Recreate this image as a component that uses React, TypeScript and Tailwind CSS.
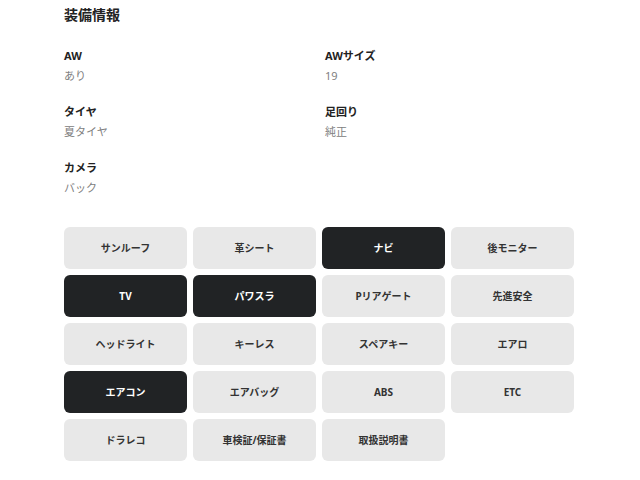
/**
 * Equipment info section
 * Spec list followed by a grid of equipment tags; owned items are dark
 */

const specs = [
  { label: "AW", value: "あり" },
  { label: "AWサイズ", value: "19" },
  { label: "タイヤ", value: "夏タイヤ" },
  { label: "足回り", value: "純正" },
  { label: "カメラ", value: "バック" },
];

const equipment: { name: string; active?: boolean }[] = [
  { name: "サンルーフ" },
  { name: "革シート" },
  { name: "ナビ", active: true },
  { name: "後モニター" },
  { name: "TV", active: true },
  { name: "パワスラ", active: true },
  { name: "Pリアゲート" },
  { name: "先進安全" },
  { name: "ヘッドライト" },
  { name: "キーレス" },
  { name: "スペアキー" },
  { name: "エアロ" },
  { name: "エアコン", active: true },
  { name: "エアバッグ" },
  { name: "ABS" },
  { name: "ETC" },
  { name: "ドラレコ" },
  { name: "車検証/保証書" },
  { name: "取扱説明書" },
];

export default function App() {
  return (
    <div className="min-h-screen bg-white font-['Noto_Sans','Noto_Sans_CJK_JP',sans-serif] text-[#222]">
      <div className="w-[510px] ml-[64px] pt-[5px]">
        <h2 className="text-[14px] leading-[20px] font-bold">装備情報</h2>

        <dl className="mt-[22px] grid grid-cols-2 gap-x-3 gap-y-[18px]">
          {specs.map((s) => (
            <div key={s.label} className="flex flex-col">
              <dt className="text-[11px] leading-[18px] font-bold">{s.label}</dt>
              <dd className="mt-[2px] text-[11px] leading-[18px] text-[#808080]">{s.value}</dd>
            </div>
          ))}
        </dl>

        <div className="mt-[30px] grid grid-cols-4 gap-[6px]">
          {equipment.map((e) => (
            <div
              key={e.name}
              className={
                e.active
                  ? "flex h-[42px] items-center justify-center rounded-md bg-[#212325] text-[10px] font-bold text-white"
                  : "flex h-[42px] items-center justify-center rounded-md bg-[#e8e8e8] text-[10px] font-bold text-[#333]"
              }
            >
              {e.name}
            </div>
          ))}
        </div>
      </div>
    </div>
  );
}
